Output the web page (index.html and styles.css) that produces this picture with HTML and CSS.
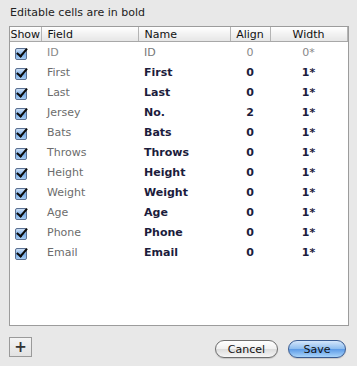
FILE: index.html
```html
<!DOCTYPE html>
<html lang="en">
<head>
  <meta charset="UTF-8">
  <title>Columns</title>
  <link rel="stylesheet" href="styles.css">
</head>
<body>

  <div class="caption">Editable cells are in bold</div>

  <div class="grid-box">
    <table class="grid">
      <colgroup>
        <col class="c-show"><col class="c-field"><col class="c-name"><col class="c-align"><col class="c-width">
      </colgroup>
      <thead>
        <tr><th>Show</th><th class="left">Field</th><th class="left">Name</th><th>Align</th><th>Width</th></tr>
      </thead>
      <tbody>
        <tr class="ro"><td><span class="check"></span></td><td class="field">ID</td><td class="name">ID</td><td>0</td><td>0*</td></tr>
        <tr><td><span class="check"></span></td><td class="field">First</td><td class="name">First</td><td>0</td><td>1*</td></tr>
        <tr><td><span class="check"></span></td><td class="field">Last</td><td class="name">Last</td><td>0</td><td>1*</td></tr>
        <tr><td><span class="check"></span></td><td class="field">Jersey</td><td class="name">No.</td><td>2</td><td>1*</td></tr>
        <tr><td><span class="check"></span></td><td class="field">Bats</td><td class="name">Bats</td><td>0</td><td>1*</td></tr>
        <tr><td><span class="check"></span></td><td class="field">Throws</td><td class="name">Throws</td><td>0</td><td>1*</td></tr>
        <tr><td><span class="check"></span></td><td class="field">Height</td><td class="name">Height</td><td>0</td><td>1*</td></tr>
        <tr><td><span class="check"></span></td><td class="field">Weight</td><td class="name">Weight</td><td>0</td><td>1*</td></tr>
        <tr><td><span class="check"></span></td><td class="field">Age</td><td class="name">Age</td><td>0</td><td>1*</td></tr>
        <tr><td><span class="check"></span></td><td class="field">Phone</td><td class="name">Phone</td><td>0</td><td>1*</td></tr>
        <tr><td><span class="check"></span></td><td class="field">Email</td><td class="name">Email</td><td>0</td><td>1*</td></tr>
      </tbody>
    </table>
  </div>

  <div class="footer">
    <button class="add">+</button>
    <div class="actions">
      <button class="pill">Cancel</button>
      <button class="pill primary">Save</button>
    </div>
  </div>

</body>
</html>
```

FILE: styles.css
```css
body { margin: 0; background: #e8e8e8; font-family: "DejaVu Sans", sans-serif; font-size: 11px; color: #222; width: 357px; height: 366px; overflow: hidden; }
.caption { padding: 6px 0 0 10px; height: 26px; box-sizing: border-box; line-height: 13px; }
.grid-box { margin-left: 9px; width: 340px; height: 300px; box-sizing: border-box; border: 1px solid #9c9c9c; background: #fff; }
.grid { border-collapse: collapse; table-layout: fixed; width: 337px; }
.c-show { width: 31px; } .c-field { width: 97px; } .c-name { width: 92px; } .c-align { width: 40px; } .c-width { width: 77px; }
.grid th { height: 14px; font-weight: normal; font-size: 11px; color: #111; padding: 0; text-align: center; background: linear-gradient(#ffffff, #f2f2f2 50%, #e6e6e6); border-bottom: 1px solid #a8a8a8; border-right: 1px solid #b4b4b4; }
.grid th.left { text-align: left; padding-left: 6px; }
.grid td { height: 20px; padding: 0; text-align: center; font-weight: bold; color: #1c1c3c; }
.grid td:first-child { text-align: left; padding-left: 5px; }
.grid td.field { text-align: left; padding-left: 6px; font-weight: normal; color: #6c6c6c; }
.grid td.name { text-align: left; padding-left: 6px; }
.grid tr.ro td { font-weight: normal; color: #888; }
.grid tr.ro td.name { color: #777; }
.check { display: inline-block; position: relative; width: 10px; height: 10px; margin-top: 3px; border: 1px solid #5a6f90; border-radius: 2px; background: linear-gradient(#cfe1f7, #7aaee8 55%, #a6cbf2); vertical-align: top; }
.check::after { content: ""; position: absolute; left: 3px; top: -3px; width: 4px; height: 9px; border: solid #0a0a0a; border-width: 0 2.5px 2.5px 0; transform: rotate(40deg); }
.footer { display: flex; justify-content: space-between; align-items: flex-start; padding: 11px 11px 0 9px; }
.add { width: 23px; height: 20px; padding: 0; border: 1px solid #9a9a9a; background: linear-gradient(#f4f4f4, #e2e2e2); font-family: "DejaVu Sans", sans-serif; font-size: 15px; font-weight: bold; line-height: 16px; color: #333; }
.actions { display: flex; gap: 10px; margin-top: 3px; }
.pill { height: 18px; padding: 0; border: 1px solid #6e6e6e; border-radius: 9px; background: linear-gradient(#ffffff, #f0f0f0 50%, #dcdcdc 51%, #f6f6f6); font-family: "DejaVu Sans", sans-serif; font-size: 11px; color: #111; width: 63px; box-shadow: 0 1px 1px rgba(0,0,0,0.15); }
.pill.primary { width: 58px; border-color: #3a5c92; background: linear-gradient(#d4e6fb, #8cbcef 50%, #5b9ae6 51%, #a9d4fa); }
```
